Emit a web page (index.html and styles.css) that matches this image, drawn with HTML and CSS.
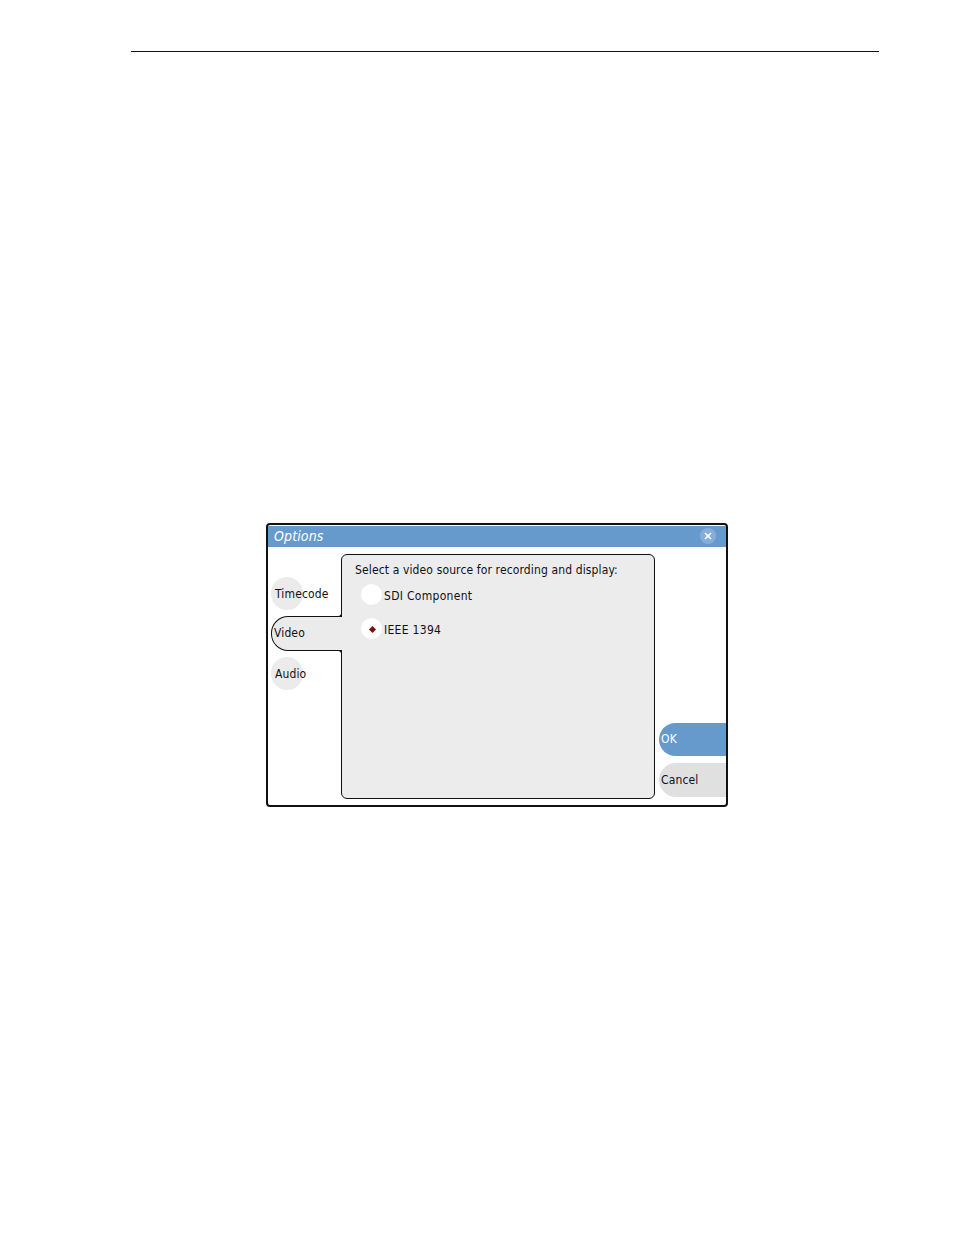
FILE: index.html
```html
<!DOCTYPE html>
<html lang="en">
  <head>
    <meta charset="UTF-8" />
    <title>Options</title>
    <link rel="stylesheet" href="styles.css">
  </head>
  <body>
    <div class="page-rule"></div>
    <div class="options-window">
      <div class="title-bar">
        <span class="title-text">Options</span>
        <span class="close-button">
          <svg width="8" height="8" viewBox="0 0 8 8">
            <path d="M1 1L7 7M7 1L1 7" stroke="#fff" stroke-width="1.6" fill="none" />
          </svg>
        </span>
      </div>
      <div class="window-body">
        <div class="tabs">
          <div class="tab">Timecode</div>
          <div class="tab tab-active">Video</div>
          <div class="tab">Audio</div>
        </div>
        <div class="panel">
          <div class="panel-heading">Select a video source for recording and display:</div>
          <div class="radio-row">
            <span class="radio"></span>
            <span class="radio-label">SDI Component</span>
          </div>
          <div class="radio-row">
            <span class="radio"><span class="radio-mark"></span></span>
            <span class="radio-label">IEEE 1394</span>
          </div>
        </div>
        <div class="actions">
          <div class="action action-ok">OK</div>
          <div class="action action-cancel">Cancel</div>
        </div>
      </div>
    </div>
  </body>
</html>
```

FILE: styles.css
```css
body {
  margin: 0;
  background-color: white;
  font-family: "DejaVu Sans Condensed", "DejaVu Sans", sans-serif;
  font-size: 12px;
  letter-spacing: 0.13px;
  color: #111;
}
.page-rule {
  height: 1px;
  margin: 51px 75px 0 131px;
  background-color: #111;
}
.options-window {
  width: 458px;
  height: 280px;
  margin: 471px 0 0 266px;
  border: 2px solid #111;
  border-radius: 4px;
  overflow: hidden;
}
.title-bar {
  display: flex;
  align-items: center;
  justify-content: space-between;
  height: 21px;
  margin-top: 1px;
  padding: 0 10px 0 6px;
  background-color: #6699cc;
}
.title-text {
  padding-bottom: 2px;
  font-size: 14px;
  font-style: italic;
  color: white;
}
.close-button {
  display: flex;
  align-items: center;
  justify-content: center;
  width: 16px;
  height: 16px;
  margin-bottom: 1px;
  border-radius: 50%;
  background-color: #85aedb;
}
.window-body {
  display: flex;
  padding-top: 7px;
}
.tabs {
  display: flex;
  flex-direction: column;
  gap: 6px;
  width: 70px;
  margin-left: 3px;
  padding-top: 23px;
}
.tab {
  width: 32px;
  height: 33px;
  padding-left: 4px;
  box-sizing: border-box;
  border-radius: 50%;
  background-color: #ebebeb;
  line-height: 35px;
  white-space: nowrap;
}
.tab-active {
  position: relative;
  z-index: 1;
  width: 71px;
  height: 35px;
  padding-left: 2px;
  border: 1px solid #111;
  border-right: none;
  border-radius: 17px 0 0 17px;
  line-height: 33px;
}
.tab-active::before,
.tab-active::after {
  content: "";
  position: absolute;
  right: 0;
  width: 4px;
  height: 4px;
  border-right: 1px solid #111;
  background-color: white;
}
.tab-active::before {
  top: -5px;
  border-bottom: 1px solid #111;
  border-bottom-right-radius: 4px;
}
.tab-active::after {
  bottom: -5px;
  border-top: 1px solid #111;
  border-top-right-radius: 4px;
}
.panel {
  width: 314px;
  height: 245px;
  box-sizing: border-box;
  padding: 6px 12px 6px 13px;
  border: 1px solid #111;
  border-radius: 6px;
  background-color: #ececec;
}
.panel-heading {
  height: 16px;
  line-height: 18px;
}
.radio-row {
  display: flex;
  align-items: center;
  gap: 2px;
  margin: 7px 0 13px 6px;
}
.radio {
  display: flex;
  align-items: center;
  justify-content: center;
  width: 21px;
  height: 21px;
  border-radius: 50%;
  background-color: white;
}
.radio-label {
  padding-top: 2px;
  letter-spacing: 0.3px;
}
.radio-mark {
  width: 5px;
  height: 5px;
  margin: 1px 0 0 1px;
  background-color: #7a1010;
  transform: rotate(45deg);
}
.actions {
  display: flex;
  flex-direction: column;
  justify-content: flex-end;
  gap: 7px;
  width: 67px;
  height: 243px;
  margin-left: 4px;
}
.action {
  height: 34px;
  padding-left: 2px;
  border-radius: 17px 0 0 17px;
  line-height: 35px;
}
.action-ok {
  height: 33px;
  background-color: #6699cc;
  line-height: 33px;
  color: white;
}
.action-cancel {
  background-color: #e0e0e0;
}
```
